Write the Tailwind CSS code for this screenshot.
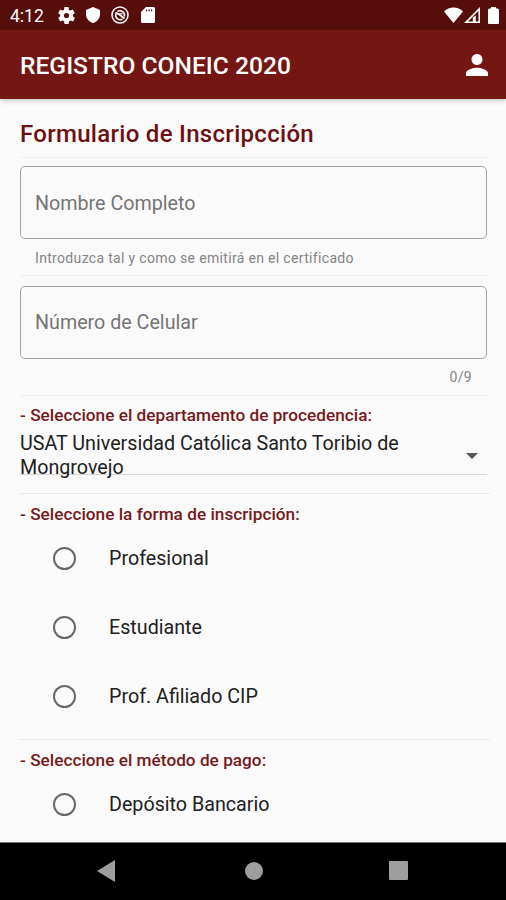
<!DOCTYPE html>
<html lang="es">
<head>
<meta charset="utf-8">
<title>Registro CONEIC 2020</title>
<script src="https://cdn.jsdelivr.net/npm/@tailwindcss/browser@4"></script>
</head>
<body class="w-[506px] h-[900px] overflow-hidden flex flex-col bg-[#fafafa] font-['Roboto',sans-serif] text-[#212121] whitespace-nowrap">
  <div class="h-[30px] shrink-0 bg-[#560e0a] text-white flex items-center pl-[10px] pr-[7px]">
    <span class="w-[48px] text-[17.500px] leading-[30px] pt-[2px]">4:12</span>
    <svg class="w-[17px] h-[17px] mr-[1px]" viewBox="2 2 20 20" fill="currentColor"><path d="M19.4 13c0-.3.1-.6.1-1s0-.7-.1-1l2.1-1.600c.2-.2.2-.4.1-.6l-2-3.500c-.1-.2-.4-.3-.6-.2l-2.500 1c-.5-.4-1.100-.7-1.700-1l-.4-2.600c0-.3-.2-.5-.5-.5h-4c-.3 0-.5.2-.5.5L9.200 5.100c-.6.300-1.200.6-1.700 1L5 5.100c-.2-.1-.5 0-.6.2l-2 3.500c-.1.200-.1.400.1.600L4.600 11c0 .3-.1.600-.1 1s0 .7.100 1l-2.100 1.600c-.2.200-.2.400-.1.600l2 3.500c.1.200.4.300.6.200l2.500-1c.5.400 1.100.7 1.700 1l.4 2.600c0 .3.200.5.500.5h4c.3 0 .5-.2.500-.5l.4-2.600c.6-.3 1.200-.6 1.700-1l2.500 1c.2.100.5 0 .6-.2l2-3.500c.1-.2.100-.4-.1-.6zM12 15a3 3 0 1 1 0-6 3 3 0 0 1 0 6z"/></svg>
    <svg class="w-[14px] h-[16px] ml-[10px]" viewBox="3 1 18 22" preserveAspectRatio="none" fill="currentColor"><path d="M12 1 3 5v6c0 5.500 3.800 10.700 9 12 5.200-1.300 9-6.500 9-12V5z"/></svg>
    <svg class="w-[18px] h-[18px] ml-[11px]" viewBox="0 0 18 18" fill="none" stroke="currentColor"><circle cx="9" cy="9" r="8" stroke-width="1.500"/><path d="M5 7.500A4.500 4.500 0 0 0 11.500 13M6.500 5.500A4.500 4.500 0 0 1 13.300 10.500" stroke-width="1.500"/><path d="M4.500 6.500 9 9l4.500 3.500" stroke-width="1.700"/><path d="M8 7.800h3.500" stroke-width="1.200"/></svg>
    <svg class="w-[14px] h-[16px] ml-[12px]" viewBox="0 0 14 16" fill="currentColor"><path fill-rule="evenodd" d="M5 0h7.500A1.500 1.500 0 0 1 14 1.500v13a1.500 1.500 0 0 1-1.500 1.500h-11A1.500 1.500 0 0 1 0 14.500V5zM5 2.500v1.800h1.200v-1.800zm2.500 0v1.800h1.200v-1.800zm2.500 0v1.800h1.200v-1.800z"/></svg>
    <svg class="w-[19px] h-[16px] ml-auto" viewBox="0 0 19 16" fill="currentColor"><path d="M0 4.500C5-.9 14-.9 19 4.500L9.500 16z"/></svg>
    <svg class="w-[16px] h-[16px] ml-[1px]" viewBox="0 0 16 16" fill="currentColor"><path fill-rule="evenodd" d="M16 0v16H0zM14.500 3.800 4 14.500h4.800V10.500l3-2v6h2.700z"/></svg>
    <svg class="w-[11px] h-[17px] ml-[8px]" viewBox="0 0 11 17" fill="currentColor"><path d="M3 0h5v1.500h1.500A1.500 1.500 0 0 1 11 3v13a1 1 0 0 1-1 1H1a1 1 0 0 1-1-1V3a1.500 1.500 0 0 1 1.500-1.500H3z"/></svg>
  </div>
  <header class="relative z-10 h-[69px] shrink-0 bg-[#741611] text-white flex items-center justify-between pl-[20px] pr-[18px] shadow-[0_2px_5px_rgba(0,0,0,0.2)]">
    <h1 class="text-[24.600px] leading-[30px] font-medium pt-[2px]">REGISTRO CONEIC 2020</h1>
    <svg class="w-[22px] h-[22px]" viewBox="4 4 16 16" fill="currentColor"><path d="M12 12c2.210 0 4-1.790 4-4s-1.790-4-4-4-4 1.790-4 4 1.790 4 4 4zm0 2c-2.670 0-8 1.340-8 4v2h16v-2c0-2.660-5.330-4-8-4z"/></svg>
  </header>
  <main class="h-[743px] shrink-0 pl-[20px] pr-[16px] flex flex-col">
    <h2 class="h-[59px] shrink-0 pt-[20px] text-[24px] leading-[31px] font-medium tracking-[0.300px] text-[#6c0f10] border-b border-[#efefef]">Formulario de Inscripcción</h2>
    <section class="h-[118px] shrink-0 pt-[8px] border-b border-[#efefef]">
      <div class="w-[467px] h-[73px] border border-[#a4a4a4] rounded-[5px] flex items-center pl-[14px] pt-[2px] text-[19.700px] text-[#757575]">Nombre Completo</div>
      <p class="pl-[15px] pt-[9px] text-[14px] leading-[20px] tracking-[0.330px] text-[#858585]">Introduzca tal y como se emitirá en el certificado</p>
    </section>
    <section class="h-[120px] shrink-0 pt-[10px] border-b border-[#efefef]">
      <div class="w-[467px] h-[73px] border border-[#a4a4a4] rounded-[5px] flex items-center pl-[14px] text-[19.700px] text-[#757575]">Número de Celular</div>
      <p class="pr-[18px] pt-[8px] text-right text-[14px] leading-[20px] tracking-[0.330px] text-[#858585]">0/9</p>
    </section>
    <section class="h-[98px] shrink-0 pt-[8px] border-b border-[#e9e9e9]">
      <h3 class="text-[17.200px] leading-[22px] font-medium text-[#76181a] tracking-[0.020px]">- Seleccione el departamento de procedencia:</h3>
      <div class="w-[467px] h-[49px] border-b border-[#d6d6d6] flex items-start justify-between pr-[9px]">
        <p class="text-[19.700px] leading-[24px] pt-[6px]">USAT Universidad Católica Santo Toribio de<br>Mongrovejo</p>
        <svg class="w-[12px] h-[6px] mt-[27px]" viewBox="0 0 12 6" fill="#555"><path d="M0 0h12L6 6z"/></svg>
      </div>
    </section>
    <section class="h-[246px] shrink-0 pt-[9px] border-b border-[#e9e9e9]">
      <h3 class="text-[17.200px] leading-[22px] font-medium text-[#76181a] tracking-[0.020px]">- Seleccione la forma de inscripción:</h3>
      <div class="h-[69px] -mt-[1px] pl-[33px] flex items-center gap-[33px] text-[19.700px]"><i class="size-[23px] rounded-full border-[2px] border-[#686868]"></i>Profesional</div>
      <div class="h-[69px] pl-[33px] flex items-center gap-[33px] text-[19.700px]"><i class="size-[23px] rounded-full border-[2px] border-[#686868]"></i>Estudiante</div>
      <div class="h-[69px] pl-[33px] flex items-center gap-[33px] text-[19.700px]"><i class="size-[23px] rounded-full border-[2px] border-[#686868]"></i>Prof. Afiliado CIP</div>
    </section>
    <section class="pt-[9px]">
      <h3 class="text-[17.200px] leading-[22px] font-medium text-[#76181a] tracking-[0.020px]">- Seleccione el método de pago:</h3>
      <div class="h-[69px] -mt-[1px] pl-[33px] flex items-center gap-[33px] text-[19.700px]"><i class="size-[23px] rounded-full border-[2px] border-[#686868]"></i>Depósito Bancario</div>
    </section>
  </main>
  <nav class="h-[58px] shrink-0 bg-black border-t border-[#777] flex items-center pl-[97px] pb-[2px]">
    <svg class="w-[18px] h-[22px]" viewBox="0 0 18 22" fill="#9e9e9e"><path d="M18 0v22L0 11z"/></svg>
    <i class="size-[18px] rounded-full bg-[#9e9e9e] ml-[130px]"></i>
    <i class="size-[19px] rounded-[1px] bg-[#9e9e9e] ml-[126px]"></i>
  </nav>
</body>
</html>
